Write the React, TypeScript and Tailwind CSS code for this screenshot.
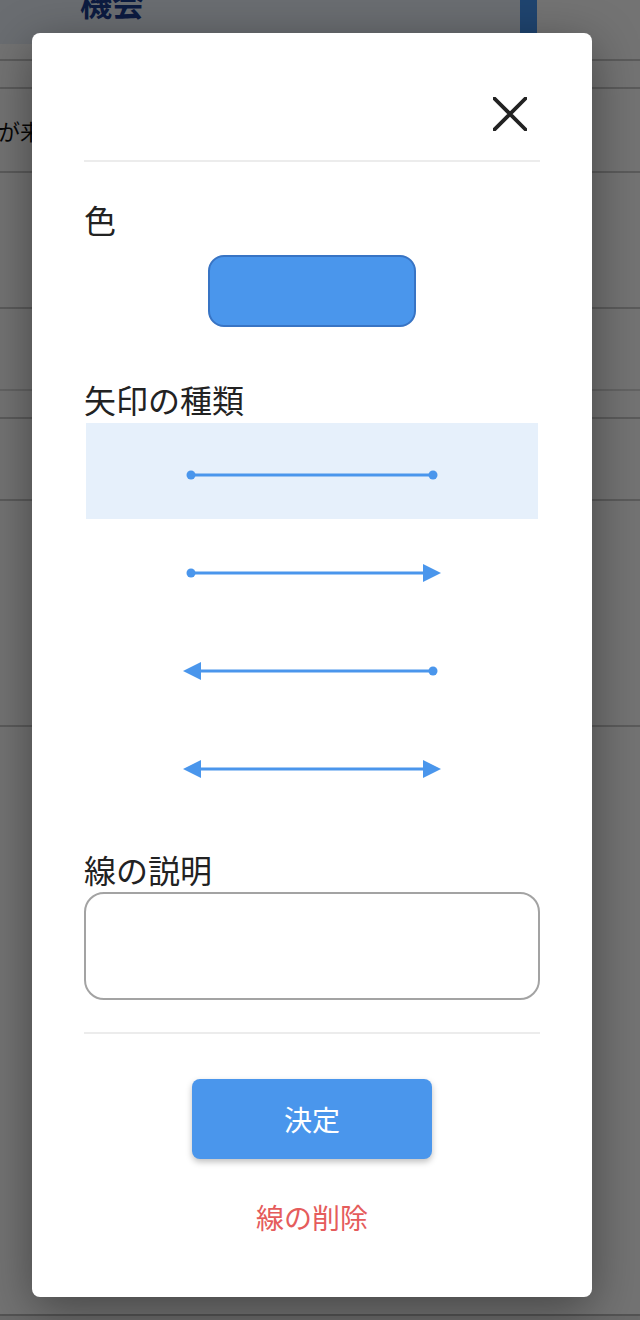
import React from 'react'

const BLUE = '#4a96ec'

function ArrowLine({ left, right }: { left: 'dot' | 'arrow'; right: 'dot' | 'arrow' }) {
  const x1 = left === 'dot' ? 9 : 14
  const x2 = right === 'dot' ? 251 : 246
  return (
    <svg width="260" height="20" viewBox="0 0 260 20" className="block">
      <line x1={x1} y1="10" x2={x2} y2="10" stroke={BLUE} strokeWidth="3" />
      {left === 'dot' ? (
        <circle cx="9" cy="10" r="4.5" fill={BLUE} />
      ) : (
        <polygon points="1,10 19,1 19,19" fill={BLUE} />
      )}
      {right === 'dot' ? (
        <circle cx="251" cy="10" r="4.5" fill={BLUE} />
      ) : (
        <polygon points="259,10 241,1 241,19" fill={BLUE} />
      )}
    </svg>
  )
}

const arrowTypes: { left: 'dot' | 'arrow'; right: 'dot' | 'arrow' }[] = [
  { left: 'dot', right: 'dot' },
  { left: 'dot', right: 'arrow' },
  { left: 'arrow', right: 'dot' },
  { left: 'arrow', right: 'arrow' },
]

export default function App() {
  const selected = 0

  return (
    <div className="relative h-[1320px] w-[640px] overflow-hidden bg-white font-['Noto_Sans_CJK_JP','Noto_Sans',sans-serif]">
      {/* page behind the dialog */}
      <div className="flex h-[44px] w-[537px] bg-[#eaf2fb]">
        <div className="flex-1 overflow-hidden pl-[80px]">
          <p className="-mt-[14px] text-[32px] font-bold leading-none text-[#1c3d8f]">機会</p>
        </div>
        <div className="w-[17px] bg-[#4597f7]" />
      </div>
      <div className="h-[15px]" />
      <div className="h-[28px] border-t-2 border-[#c9c9c9]" />
      <div className="flex h-[84px] items-center border-t-2 border-[#c9c9c9]">
        <p className="-ml-[2px] whitespace-nowrap text-[22px] text-[#111]">が来ました</p>
      </div>
      <div className="h-[136px] border-t-2 border-[#c9c9c9]" />
      <div className="h-[82px] border-t-2 border-[#c9c9c9]" />
      <div className="h-[28px] border-t-2 border-[#dcdcdc]" />
      <div className="h-[82px] border-t-2 border-[#c9c9c9]" />
      <div className="h-[226px] border-t-2 border-[#c9c9c9]" />
      <div className="h-[589px] border-t-2 border-[#c9c9c9]" />
      <div className="h-[6px] border-t-2 border-[#b8b8b8] bg-[#ececec]" />

      {/* overlay */}
      <div className="absolute inset-0 bg-black/55" />

      {/* dialog */}
      <div className="absolute left-[32px] top-[33px] flex h-[1264px] w-[560px] flex-col rounded-[8px] bg-white px-[52px] shadow-[0_12px_48px_rgba(0,0,0,0.4)]">
        <div className="flex h-[127px] items-start justify-end pt-[57px] pr-[6px]">
          <button className="flex h-[48px] w-[48px] items-center justify-center">
            <svg width="34" height="34" viewBox="0 0 34 34">
              <path d="M1.5 1.5 L32.5 32.5 M32.5 1.5 L1.5 32.5" stroke="#222" strokeWidth="3.8" strokeLinecap="square" />
            </svg>
          </button>
        </div>
        <div className="h-[2px] bg-[#ececec]" />

        <p className="mt-[41px] text-[32px] leading-none text-[#222]">色</p>
        <div className="mt-[20px] flex justify-center">
          <div className="h-[72px] w-[208px] rounded-[16px] border-2 border-[#3874c4] bg-[#4a96ec]" />
        </div>

        <p className="mt-[56px] text-[32px] leading-none text-[#222]">矢印の種類</p>
        <div className="mt-[8px] flex flex-col gap-[2px] px-[2px]">
          {arrowTypes.map((a, i) => (
            <div
              key={i}
              className={
                'flex h-[96px] items-center justify-center pt-[8px] ' +
                (i === selected ? 'bg-[#e6f0fb]' : 'bg-white')
              }
            >
              <ArrowLine left={a.left} right={a.right} />
            </div>
          ))}
        </div>

        <p className="mt-[40px] text-[32px] leading-none text-[#222]">線の説明</p>
        <textarea className="mt-[7px] block h-[108px] w-full resize-none rounded-[20px] border-2 border-[#a3a3a3] bg-white outline-none" />

        <div className="mt-[32px] h-[2px] bg-[#ececec]" />

        <div className="mt-[45px] flex justify-center">
          <button className="flex h-[80px] w-[240px] items-center justify-center rounded-[8px] bg-[#4a96ec] text-[28px] text-white shadow-[0_3px_6px_rgba(0,0,0,0.25)]">
            決定
          </button>
        </div>

        <p className="mt-[44px] text-center text-[28px] leading-none text-[#e55c5c]">線の削除</p>
      </div>
    </div>
  )
}
